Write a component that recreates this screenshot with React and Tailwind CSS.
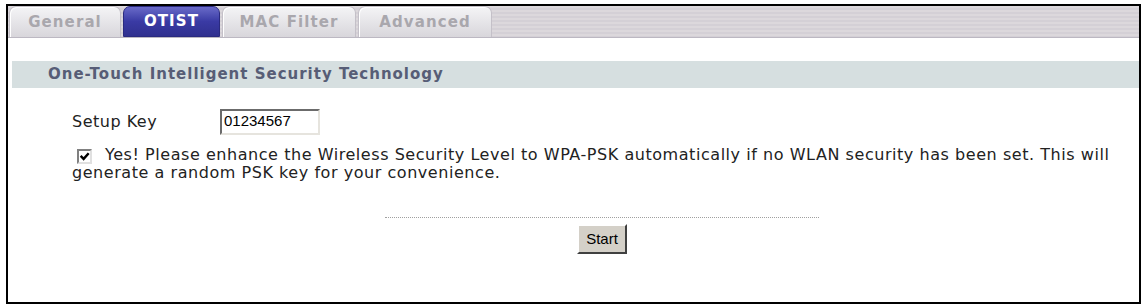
import React from 'react';

const tabs = [
  { label: 'General', width: 'w-[112px]', active: false },
  { label: 'OTIST', width: 'w-[97px]', active: true },
  { label: 'MAC Filter', width: 'w-[134px]', active: false },
  { label: 'Advanced', width: 'w-[134px]', active: false },
];

const Tab = ({ label, width, active }) => (
  <div
    className={
      active
        ? `${width} h-[31px] rounded-t-[7px] border border-[#2a2a80] bg-gradient-to-b from-[#6a6ac8] via-[#3a3aa4] to-[#30308f] flex items-center justify-center text-white`
        : `${width} h-[31px] rounded-t-[7px] border border-[#c4c0c8] border-b-0 bg-gradient-to-b from-[#f4f4f6] to-[#d8d6db] shadow-[inset_1px_1px_0_#ffffff] flex items-center justify-center text-[#a9a7ad]`
    }
  >
    <span className="text-[15px] font-bold tracking-[1.1px] leading-none">{label}</span>
  </div>
);

const CheckMark = () => (
  <svg width="11" height="11" viewBox="0 0 10 10" aria-hidden="true">
    <path d="M1.5 4.5l2.7 2.7L8.8 2" fill="none" stroke="#000" strokeWidth="2.2" />
  </svg>
);

export default function App() {
  return (
    <div className="w-[1143px] h-[306px] bg-white pt-[4px] pl-[6px] font-['DejaVu_Sans',sans-serif]">
      <div className="w-[1135px] h-[300px] border-2 border-black">
        {/* tab strip */}
        <div className="h-[32px] flex items-end gap-[2px] pl-[1px] bg-[repeating-linear-gradient(180deg,#dcd8dc_0px,#dcd8dc_2px,#d4d0d6_2px,#d4d0d6_4px)] border-b border-[#bcb8c2]">
          {tabs.map((t) => (
            <Tab key={t.label} {...t} />
          ))}
        </div>

        {/* section header */}
        <div className="mt-[23px] ml-[4px] h-[27px] bg-[#d6dfe0] flex items-center pl-[36px]">
          <span className="text-[15px] font-bold text-[#575d76] tracking-[1px]">
            One-Touch Intelligent Security Technology
          </span>
        </div>

        {/* setup key */}
        <div className="mt-[20px] ml-[64px] flex items-center h-[27px]">
          <span className="w-[148px] text-[16px] tracking-[0.5px] text-[#222]">Setup Key</span>
          <div className="w-[100px] h-[26px] border-2 border-t-[#6b6b6b] border-l-[#6b6b6b] border-r-[#e6e4de] border-b-[#e6e4de] flex items-center pl-[2px] font-['Liberation_Sans',sans-serif] text-[15px] text-black">
            01234567
          </div>
        </div>

        {/* checkbox */}
        <div className="mt-[11px] ml-[64px] mr-[12px] text-[16px] tracking-[0.55px] leading-[18px] text-[#222]">
          <span className="inline-flex align-[-2px] mr-[13px] ml-[5px] w-[15px] h-[15px] border-2 border-t-[#808080] border-l-[#808080] border-r-[#e0e0e0] border-b-[#e0e0e0] bg-white items-center justify-center">
            <CheckMark />
          </span>
          Yes! Please enhance the Wireless Security Level to WPA-PSK automatically if no WLAN security has been set. This will generate a random PSK key for your convenience.
        </div>

        {/* actions */}
        <div className="mt-[35px] ml-[377px] w-[434px] flex flex-col items-center">
          <div className="w-full border-t border-dotted border-[#a0a0a0]" />
          <button className="mt-[6px] w-[50px] h-[30px] bg-[#d4d0c8] border-2 border-t-white border-l-white border-r-[#404040] border-b-[#404040] font-['Liberation_Sans',sans-serif] text-[15px] text-black">
            Start
          </button>
        </div>
      </div>
    </div>
  );
}
